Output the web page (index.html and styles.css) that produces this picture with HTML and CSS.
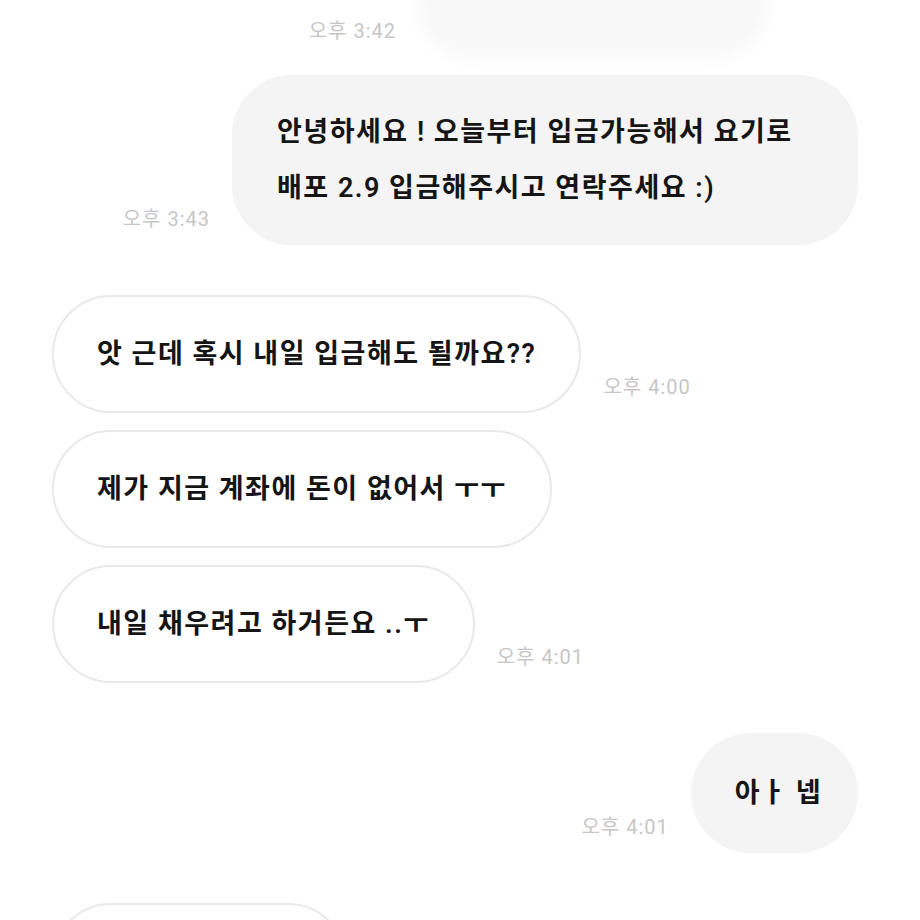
FILE: index.html
```html
<!DOCTYPE html>
<html lang="ko">
<head>
    <meta charset="UTF-8">
    <title>Chat</title>
    <link rel="stylesheet" href="styles.css">
</head>
<body>

    <div class="chat">

        <!-- earlier message, cut off at the top -->
        <div class="row mine first">
            <span class="time">오후 3:42</span>
            <div class="bubble smudge"></div>
        </div>

        <div class="row mine">
            <span class="time">오후 3:43</span>
            <div class="bubble wide">안녕하세요 ! 오늘부터 입금가능해서 요기로<br>배포 2.9 입금해주시고 연락주세요 :)</div>
        </div>

        <div class="row theirs sender">
            <div class="bubble">앗 근데 혹시 내일 입금해도 될까요??</div>
            <span class="time">오후 4:00</span>
        </div>

        <div class="row theirs">
            <div class="bubble">제가 지금 계좌에 돈이 없어서 ㅜㅜ</div>
        </div>

        <div class="row theirs">
            <div class="bubble">내일 채우려고 하거든요 ..ㅜ</div>
            <span class="time">오후 4:01</span>
        </div>

        <div class="row mine sender">
            <span class="time">오후 4:01</span>
            <div class="bubble short">아ㅏ 넵</div>
        </div>

        <!-- next message, cut off at the bottom -->
        <div class="row theirs sender">
            <div class="bubble empty"></div>
        </div>

    </div>

</body>
</html>
```

FILE: styles.css
```css
body {
    margin: 0;
    background: #ffffff;
    font-family: "Roboto", "Noto Sans CJK KR", "Noto Sans", sans-serif;
    color: #151515;
    overflow: hidden;
}

.chat {
    display: flex;
    flex-direction: column;
    gap: 17px;
    padding: 0 62px 0 52px;
}

.row {
    display: flex;
    align-items: flex-end;
    gap: 22px;
}

    .row.mine {
        justify-content: flex-end;
    }

    .row.sender {
        margin-top: 33px;
    }

.bubble {
    font-size: 27px;
    font-weight: 600;
    letter-spacing: 1.5px;
    line-height: 56px;
    padding: 30px 44px;
    border-radius: 60px;
    white-space: nowrap;
}

.mine .bubble {
    background: #f4f4f4;
}

.theirs .bubble {
    background: #ffffff;
    border: 2px solid #e9e9e9;
    padding: 29px 43px;
}

.bubble.wide {
    width: 536px;
    padding: 29px 45px;
}

.bubble.short {
    padding: 32px 36px 32px 44px;
}

.bubble.smudge {
    width: 350px;
    height: 110px;
    margin-top: -52px;
    margin-right: 90px;
    padding: 0;
    background: #f8f8f8;
    filter: blur(8px);
}

.bubble.empty {
    width: 205px;
    height: 56px;
}

.time {
    font-size: 20px;
    letter-spacing: 1px;
    color: #c6c6c6;
    margin-bottom: 13px;
    white-space: nowrap;
}

.first .time {
    margin-bottom: 14px;
}
```
